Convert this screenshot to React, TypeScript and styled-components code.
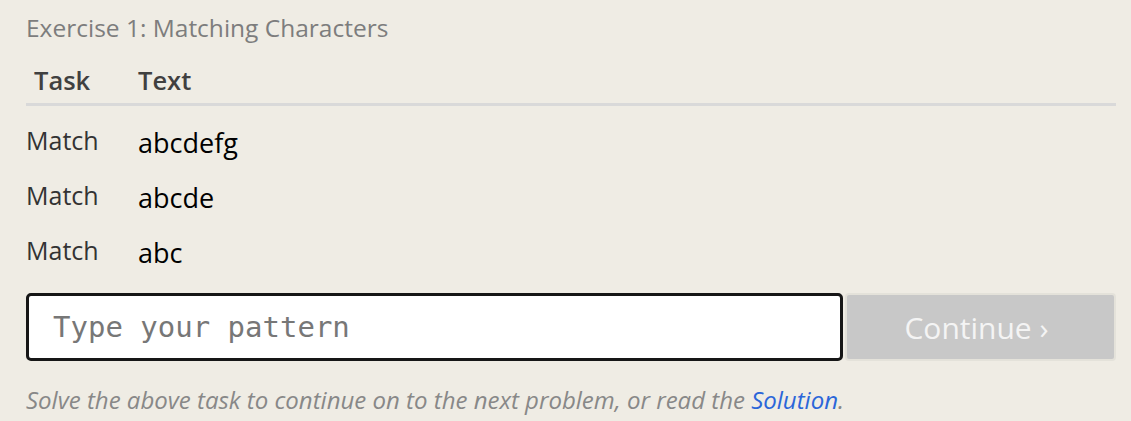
import React from "react";
import styled, { createGlobalStyle } from "styled-components";

const GlobalStyle = createGlobalStyle`
  html, body {
    margin: 0;
    padding: 0;
    background: #efece4;
  }
  body {
    font-family: "Open Sans", "Noto Sans", sans-serif;
  }
`;

const rows = ["abcdefg", "abcde", "abc"];

function App() {
  return (
    <>
      <GlobalStyle />
      <Page>
        <Title>Exercise 1: Matching Characters</Title>
        <Table>
          <HeaderRow>
            <HeadCell $first>Task</HeadCell>
            <HeadCell>Text</HeadCell>
          </HeaderRow>
          {rows.map((text) => (
            <Row key={text}>
              <TaskCell>Match</TaskCell>
              <TextCell>{text}</TextCell>
            </Row>
          ))}
        </Table>
        <InputRow>
          <PatternInput placeholder="Type your pattern" />
          <ContinueButton disabled>Continue ›</ContinueButton>
        </InputRow>
        <Hint>
          Solve the above task to continue on to the next problem, or read the{" "}
          <SolutionLink href="#">Solution</SolutionLink>.
        </Hint>
      </Page>
    </>
  );
}

const Page = styled.div`
  padding: 12px 15px 0 26px;
`;

const Title = styled.div`
  font-size: 24.5px;
  line-height: 32px;
  color: #7d7d7d;
`;

const Table = styled.div`
  margin-top: 20px;
`;

const HeaderRow = styled.div`
  display: grid;
  grid-template-columns: 112px 1fr;
  padding-bottom: 7px;
  border-bottom: 3px solid #d9d9d9;
`;

const HeadCell = styled.div<{ $first?: boolean }>`
  font-size: 25.5px;
  font-weight: 600;
  line-height: 32px;
  color: #404040;
  padding-left: ${(p) => (p.$first ? "8px" : "0")};
`;

const Row = styled.div`
  display: grid;
  grid-template-columns: 112px 1fr;
  box-sizing: border-box;
  height: 55px;
  padding-top: 17px;
  align-items: start;
`;

const TaskCell = styled.div`
  font-size: 25px;
  line-height: 34px;
  color: #333;
`;

const TextCell = styled.div`
  font-size: 27px;
  line-height: 34px;
  color: #000;
  margin-top: 3px;
`;

const InputRow = styled.div`
  display: flex;
  margin-top: 22px;
  height: 68px;
`;

const PatternInput = styled.input`
  flex: 1;
  box-sizing: border-box;
  height: 68px;
  border: 3px solid #161616;
  border-radius: 5px;
  background: #fff;
  padding: 0 24px;
  font-family: "DejaVu Sans Mono", "Liberation Mono", monospace;
  font-size: 29px;
  outline: none;

  &::placeholder {
    color: #777;
  }
`;

const ContinueButton = styled.button`
  width: 271px;
  margin-left: 2px;
  box-sizing: border-box;
  height: 68px;
  background: #c8c8c8;
  border: 2px solid #e4e2da;
  border-radius: 4px;
  color: #f4f4f4;
  font-family: "Open Sans", "Noto Sans", sans-serif;
  font-size: 30px;
  padding: 0 8px 0 0;
`;

const Hint = styled.div`
  margin-top: 23px;
  font-size: 24px;
  line-height: 32px;
  font-style: italic;
  color: #888;
`;

const SolutionLink = styled.a`
  color: #2b66d9;
  text-decoration: none;
`;

export default App;
